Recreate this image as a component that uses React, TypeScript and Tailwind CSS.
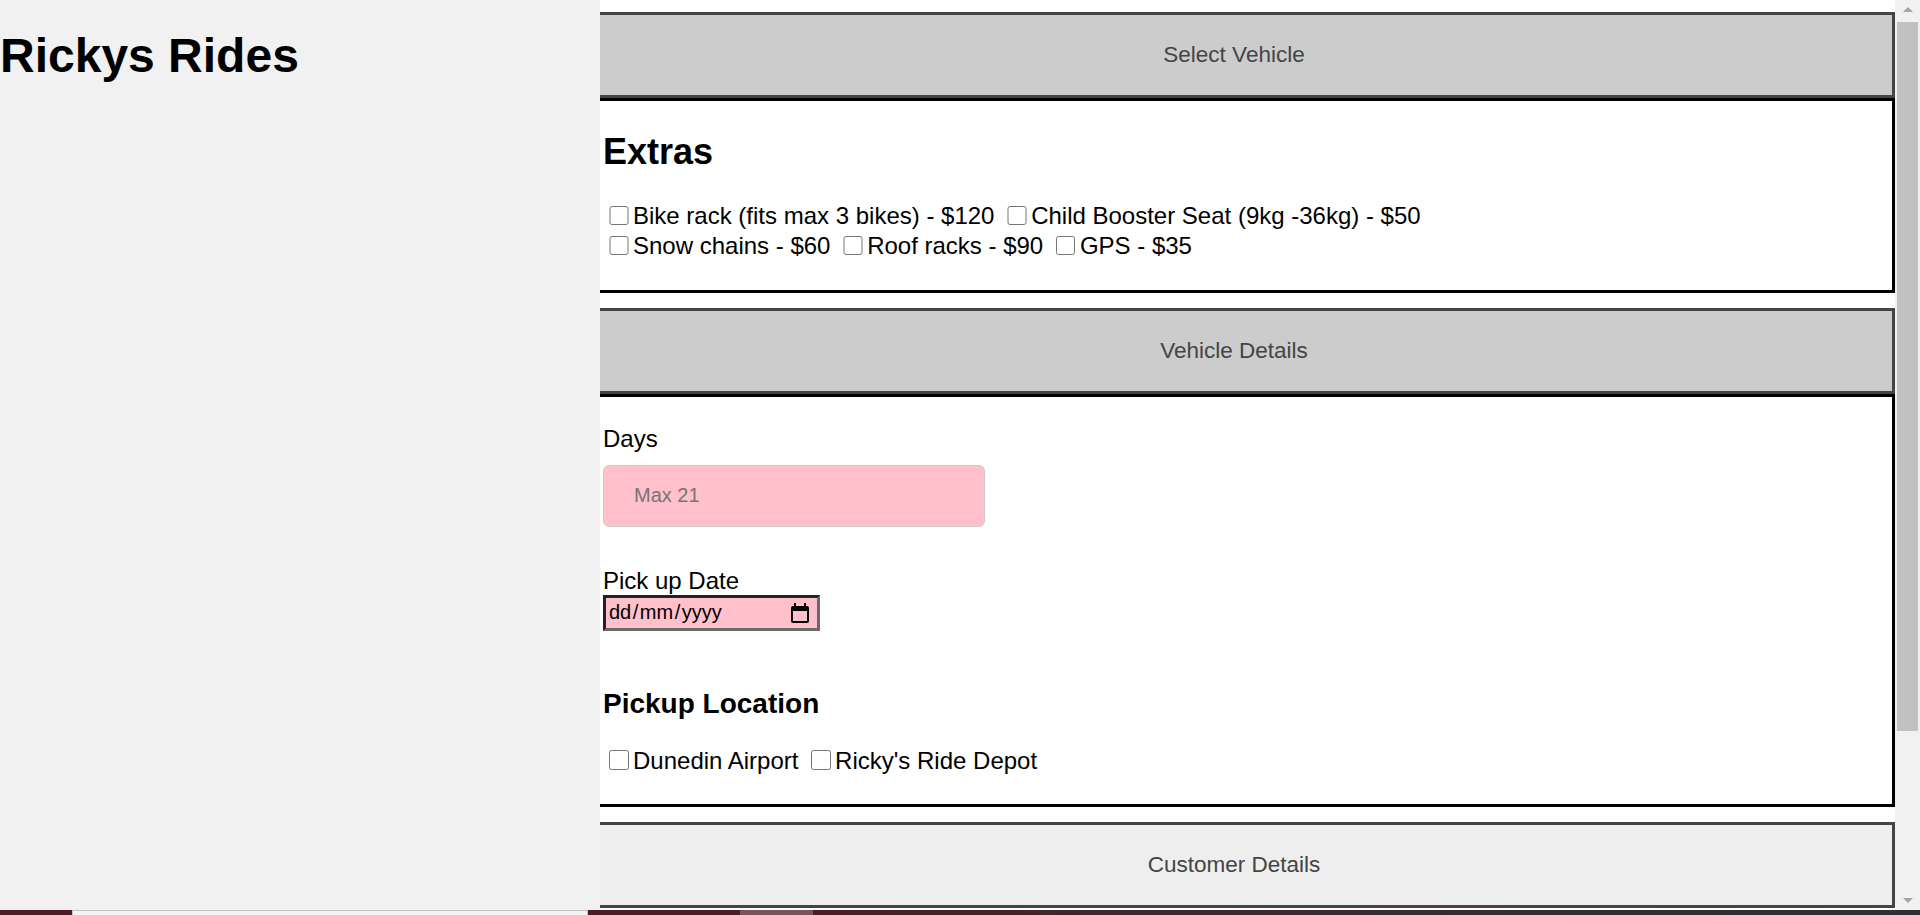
import React from 'react';

const AccordionButton = ({ label, active }: { label: string; active?: boolean }) => (
  <button
    className={`block w-full h-[86px] shrink-0 border-[3px] border-l-0 border-[#444] pr-[24px] text-center text-[22.5px] leading-[26px] text-[#444] ${
      active ? 'bg-[#ccc]' : 'bg-[#eee]'
    }`}
  >
    {label}
  </button>
);

const Check = ({ label }: { label: string }) => (
  <>
    <input type="checkbox" className="w-[19.5px] h-[19.5px] ml-[6px] mr-[4.5px] my-[4.5px] align-[-1px]" />
    <label>{label}</label>{' '}
  </>
);

const CalendarIcon = () => (
  <svg width="20" height="20" viewBox="0 0 20 20" className="shrink-0">
    <path
      fillRule="evenodd"
      fill="#000"
      d="M4 0h2v3H4z M14 0h2v3h-2z M3 3h14a2 2 0 0 1 2 2v13a2 2 0 0 1-2 2H3a2 2 0 0 1-2-2V5a2 2 0 0 1 2-2z M3 8v10h14V8z"
    />
  </svg>
);

const App = () => {
  return (
    <div className="w-full h-[915px] overflow-hidden flex flex-col font-['Liberation_Sans',Arial,sans-serif] text-black">
      <div className="h-[910px] flex shrink-0">
        {/* Sidebar */}
        <aside className="w-[600px] shrink-0 bg-[#f1f1f1]">
          <h1 className="mt-[28px] text-[48px] leading-[55px] font-bold">Rickys Rides</h1>
        </aside>

        {/* Main */}
        <main className="flex-1 bg-white pt-[12px] flex flex-col">
          <AccordionButton label="Select Vehicle" active />
          <div className="h-[195px] shrink-0 border-[3px] border-l-0 border-black bg-white pl-[3px]">
            <h2 className="mt-[30px] text-[36px] leading-[41px] font-bold">Extras</h2>
            <div className="mt-[29px] text-[24px] leading-[30px]">
              <Check label="Bike rack (fits max 3 bikes) - $120" />
              <Check label="Child Booster Seat (9kg -36kg) - $50" />
              <br />
              <Check label="Snow chains - $60" />
              <Check label="Roof racks - $90" />
              <Check label="GPS - $35" />
            </div>
          </div>

          <div className="mt-[15px]">
            <AccordionButton label="Vehicle Details" active />
          </div>
          <div className="h-[413px] shrink-0 border-[3px] border-l-0 border-black bg-white pl-[3px] text-[24px] leading-[27.6px]">
            <label className="block mt-[28px]">Days</label>
            <input
              type="text"
              placeholder="Max 21"
              className="block mt-[12px] w-[382px] h-[62px] px-[30px] border-[1.5px] border-[#ccc] rounded-[6px] bg-[pink] text-[20px] leading-[23px] placeholder:text-[#757575] outline-none"
            />
            <label className="block mt-[40px]">Pick up Date</label>
            <div className="mt-[0.5px] w-[217px] h-[36px] bg-[pink] border-[3px] border-t-[#222] border-l-[#222] border-b-[#6a6a6a] border-r-[#6a6a6a] flex items-center justify-between pl-[3px] pr-[7px] text-[20px] leading-[23px]">
              <span>
                dd<span className="mx-[1.5px]">/</span>mm<span className="mx-[1.5px]">/</span>yyyy
              </span>
              <CalendarIcon />
            </div>
            <h3 className="mt-[57px] text-[28px] leading-[32px] font-bold">Pickup Location</h3>
            <div className="mt-[26px]">
              <Check label="Dunedin Airport" />
              <Check label="Ricky's Ride Depot" />
            </div>
          </div>

          <div className="mt-[15px]">
            <AccordionButton label="Customer Details" />
          </div>
        </main>

        {/* Scrollbar */}
        <div className="w-[25px] shrink-0 bg-[#f1f1f1] flex flex-col items-center">
          <div className="h-[22px] pt-[7px]">
            <svg width="10" height="5" viewBox="0 0 10 5">
              <polygon points="0,5 10,5 5,0" fill="#a3a3a3" />
            </svg>
          </div>
          <div className="w-[21px] h-[709px] bg-[#c1c1c1]" />
          <div className="flex-1" />
          <div className="h-[12px]">
            <svg width="10" height="5" viewBox="0 0 10 5">
              <polygon points="0,0 10,0 5,5" fill="#a3a3a3" />
            </svg>
          </div>
        </div>
      </div>

      {/* Bottom strip of whatever sits below the window */}
      <div className="h-[5px] flex shrink-0">
        <div className="w-[72px] bg-[#4b1d24]" />
        <div className="w-[516px] bg-[#f4f4f4] border-t border-x border-[#c3c3c3]" />
        <div className="w-[152px] bg-[#4b1d24]" />
        <div className="w-[73px] bg-[#7b5359]" />
        <div className="flex-1 bg-gradient-to-r from-[#4b1d24] via-[#3a2a30] to-[#2e2e36]" />
      </div>
    </div>
  );
};

export default App;
